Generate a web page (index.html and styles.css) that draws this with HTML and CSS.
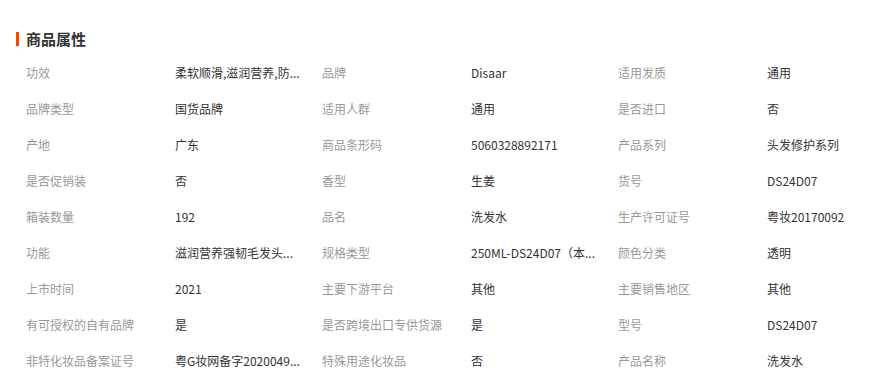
FILE: index.html
```html
<!DOCTYPE html>
<html lang="zh-CN">
<head>
<meta charset="utf-8">
<title>商品属性</title>
<link rel="stylesheet" href="styles.css">
</head>
<body>
<section class="attrs">
  <h2 class="attrs-title">商品属性</h2>
  <ul class="attrs-grid">
    <li class="attr"><span class="attr-label">功效</span><span class="attr-value">柔软顺滑,滋润营养,防...</span></li>
    <li class="attr"><span class="attr-label">品牌</span><span class="attr-value">Disaar</span></li>
    <li class="attr"><span class="attr-label">适用发质</span><span class="attr-value">通用</span></li>
    <li class="attr"><span class="attr-label">品牌类型</span><span class="attr-value">国货品牌</span></li>
    <li class="attr"><span class="attr-label">适用人群</span><span class="attr-value">通用</span></li>
    <li class="attr"><span class="attr-label">是否进口</span><span class="attr-value">否</span></li>
    <li class="attr"><span class="attr-label">产地</span><span class="attr-value">广东</span></li>
    <li class="attr"><span class="attr-label">商品条形码</span><span class="attr-value">5060328892171</span></li>
    <li class="attr"><span class="attr-label">产品系列</span><span class="attr-value">头发修护系列</span></li>
    <li class="attr"><span class="attr-label">是否促销装</span><span class="attr-value">否</span></li>
    <li class="attr"><span class="attr-label">香型</span><span class="attr-value">生姜</span></li>
    <li class="attr"><span class="attr-label">货号</span><span class="attr-value">DS24D07</span></li>
    <li class="attr"><span class="attr-label">箱装数量</span><span class="attr-value">192</span></li>
    <li class="attr"><span class="attr-label">品名</span><span class="attr-value">洗发水</span></li>
    <li class="attr"><span class="attr-label">生产许可证号</span><span class="attr-value">粤妆20170092</span></li>
    <li class="attr"><span class="attr-label">功能</span><span class="attr-value">滋润营养强韧毛发头...</span></li>
    <li class="attr"><span class="attr-label">规格类型</span><span class="attr-value">250ML-DS24D07（本...</span></li>
    <li class="attr"><span class="attr-label">颜色分类</span><span class="attr-value">透明</span></li>
    <li class="attr"><span class="attr-label">上市时间</span><span class="attr-value">2021</span></li>
    <li class="attr"><span class="attr-label">主要下游平台</span><span class="attr-value">其他</span></li>
    <li class="attr"><span class="attr-label">主要销售地区</span><span class="attr-value">其他</span></li>
    <li class="attr"><span class="attr-label">有可授权的自有品牌</span><span class="attr-value">是</span></li>
    <li class="attr"><span class="attr-label">是否跨境出口专供货源</span><span class="attr-value">是</span></li>
    <li class="attr"><span class="attr-label">型号</span><span class="attr-value">DS24D07</span></li>
    <li class="attr"><span class="attr-label">非特化妆品备案证号</span><span class="attr-value">粤G妆网备字2020049...</span></li>
    <li class="attr"><span class="attr-label">特殊用途化妆品</span><span class="attr-value">否</span></li>
    <li class="attr"><span class="attr-label">产品名称</span><span class="attr-value">洗发水</span></li>
  </ul>
</section>
</body>
</html>
```

FILE: styles.css
```css
* { box-sizing: border-box; }
html, body {
  margin: 0;
  padding: 0;
  background: #fff;
}
body {
  font-family: "Microsoft YaHei", "Noto Sans CJK SC", "Noto Sans", sans-serif;
  font-size: 12px;
  color: #333;
}
.attrs {
  padding: 29px 0 0 16px;
}
.attrs-title {
  margin: 3px 0 0;
  padding-left: 7px;
  border-left: 3px solid #ff4400;
  height: 14px;
  line-height: 14px;
  font-size: 15px;
  font-weight: bold;
  color: #333;
}
.attrs-grid {
  list-style: none;
  margin: 8px 0 0 10px;
  padding: 0;
  display: grid;
  grid-template-columns: repeat(3, 296px);
  grid-auto-rows: 36px;
}
.attr {
  display: flex;
  align-items: center;
  white-space: nowrap;
}
.attr-label {
  flex: 0 0 149px;
  color: #999;
}
.attr-value {
  color: #333;
}
```
